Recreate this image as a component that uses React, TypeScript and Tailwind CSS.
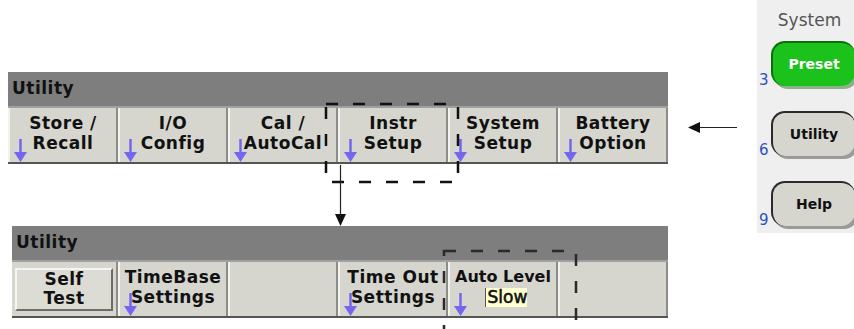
import React from "react";

const btnFont = { fontFamily: '"DejaVu Sans", Verdana, sans-serif' };

function DownArrow() {
  return (
    <svg width="13" height="23" viewBox="0 0 13 23" className="absolute left-[4px] bottom-0">
      <line x1="6.5" y1="0" x2="6.5" y2="14" stroke="#7466ee" strokeWidth="2.5" />
      <polygon points="0,13 13,13 6.5,23" fill="#7466ee" />
    </svg>
  );
}

type Soft = { top: string; bottom: string; arrow?: boolean };

function SoftKey({ top, bottom, arrow = true }: Soft) {
  return (
    <div
      className="relative w-[110px] h-full bg-[#d6d6cf] border-l-2 border-l-[#f2f2ee] border-r-2 border-r-[#8c8c88] flex flex-col items-center pt-[5px] text-[17px] font-bold leading-[20px] text-[#111] tracking-[0.5px] whitespace-nowrap"
      style={btnFont}
    >
      <span>{top}</span>
      <span>{bottom}</span>
      {arrow && <DownArrow />}
    </div>
  );
}

function TitleBar() {
  return (
    <div
      className="h-[36px] bg-[#7e7e7e] border-b-2 border-b-[#a0a0a0] flex items-center pl-[4px] text-[17px] font-bold text-[#111] tracking-[0.5px]"
      style={btnFont}
    >
      Utility
    </div>
  );
}

function SideKey({ label, num, green }: { label: string; num: string; green?: boolean }) {
  return (
    <div className="flex items-end">
      <span className="w-[12px] text-[15px] leading-none text-[#2d4fc0] -mb-[2px]" style={{ fontFamily: '"DejaVu Sans", sans-serif' }}>
        {num}
      </span>
      <div
        className={`w-[84px] h-[45px] rounded-[14px] flex items-center justify-center text-[14px] font-bold border-t-2 border-l-2 ${
          green
            ? "bg-[#1cc21c] text-white border-[#0e6e0e] shadow-[3px_3px_0_#8fb08f]"
            : "bg-[#d6d6cf] text-[#111] border-[#2a2a2a] shadow-[3px_3px_0_#9a9a96]"
        }`}
        style={{ fontFamily: '"DejaVu Sans", Tahoma, sans-serif' }}
      >
        {label}
      </div>
    </div>
  );
}

export default function App() {
  return (
    <div className="relative w-[854px] h-[329px] bg-white overflow-hidden flex">
      <div className="w-[757px] pt-[72px]">
        {/* top menu */}
        <div className="ml-[8px] w-[660px]">
          <TitleBar />
          <div className="h-[56px] flex border-b-2 border-b-[#555]">
            <SoftKey top="Store /" bottom="Recall" />
            <SoftKey top="I/O" bottom="Config" />
            <SoftKey top="Cal /" bottom="AutoCal" />
            <SoftKey top="Instr" bottom="Setup" />
            <SoftKey top="System" bottom="Setup" />
            <SoftKey top="Battery" bottom="Option" />
          </div>
        </div>

        {/* bottom menu */}
        <div className="ml-[12px] w-[656px] mt-[62px]">
          <TitleBar />
          <div className="h-[56px] flex border-b-2 border-b-[#555]">
            <div className="w-[106px] h-full bg-[#d6d6cf] border-r-2 border-r-[#8c8c88] flex items-center pl-[3px]">
              <div
                className="w-[98px] h-[43px] bg-[#dcdcd5] border-2 border-t-[#f4f4f0] border-l-[#f4f4f0] border-b-[#6c6c68] border-r-[#6c6c68] flex flex-col items-center justify-center text-[17px] font-bold leading-[19px] text-[#111] tracking-[0.5px]"
                style={btnFont}
              >
                <span>Self</span>
                <span>Test</span>
              </div>
            </div>
            <SoftKey top="TimeBase" bottom="Settings" />
            <SoftKey top="" bottom="" arrow={false} />
            <SoftKey top="Time Out" bottom="Settings" />
            <div
              className="relative w-[110px] h-full bg-[#d6d6cf] border-l-2 border-l-[#f2f2ee] border-r-2 border-r-[#8c8c88] flex flex-col items-center pt-[5px] text-[16px] font-bold leading-[20px] text-[#111] whitespace-nowrap"
              style={btnFont}
            >
              <span>Auto Level</span>
              <span className="mt-[1px] ml-[6px] pl-[2px] border-l border-l-[#555] bg-[#ffffd2] leading-[19px] text-[17px] font-normal [-webkit-text-stroke:0.6px_#111]">
                Slow
              </span>
              <DownArrow />
            </div>
            <SoftKey top="" bottom="" arrow={false} />
          </div>
        </div>
      </div>

      {/* front panel keys */}
      <div className="w-[97px] h-[233px] bg-[#efefef] flex flex-col items-start pl-[2px] pt-[8px]">
        <div className="w-full text-center text-[17px] text-[#555] pl-[6px]" style={{ fontFamily: '"DejaVu Sans", sans-serif' }}>
          System
        </div>
        <div className="mt-[7px] flex flex-col gap-[25px]">
          <SideKey label="Preset" num="3" green />
          <SideKey label="Utility" num="6" />
          <SideKey label="Help" num="9" />
        </div>
      </div>

      {/* callout lines */}
      <svg className="absolute left-0 top-0 pointer-events-none" width="854" height="329">
        <rect x="326" y="104" width="132" height="78" fill="none" stroke="#111" strokeWidth="2.5" strokeDasharray="12 15" />
        <line x1="340.5" y1="165" x2="340.5" y2="216" stroke="#222" strokeWidth="1.2" />
        <polygon points="335,214 346,214 340.5,226" fill="#111" />
        <line x1="698" y1="127.5" x2="737" y2="127.5" stroke="#222" strokeWidth="1.2" />
        <polygon points="688,127.5 700,122 700,133" fill="#111" />
        <rect x="444" y="251" width="132" height="100" fill="none" stroke="#2a2a2e" strokeWidth="2.5" strokeDasharray="12 15" />
      </svg>
    </div>
  );
}
